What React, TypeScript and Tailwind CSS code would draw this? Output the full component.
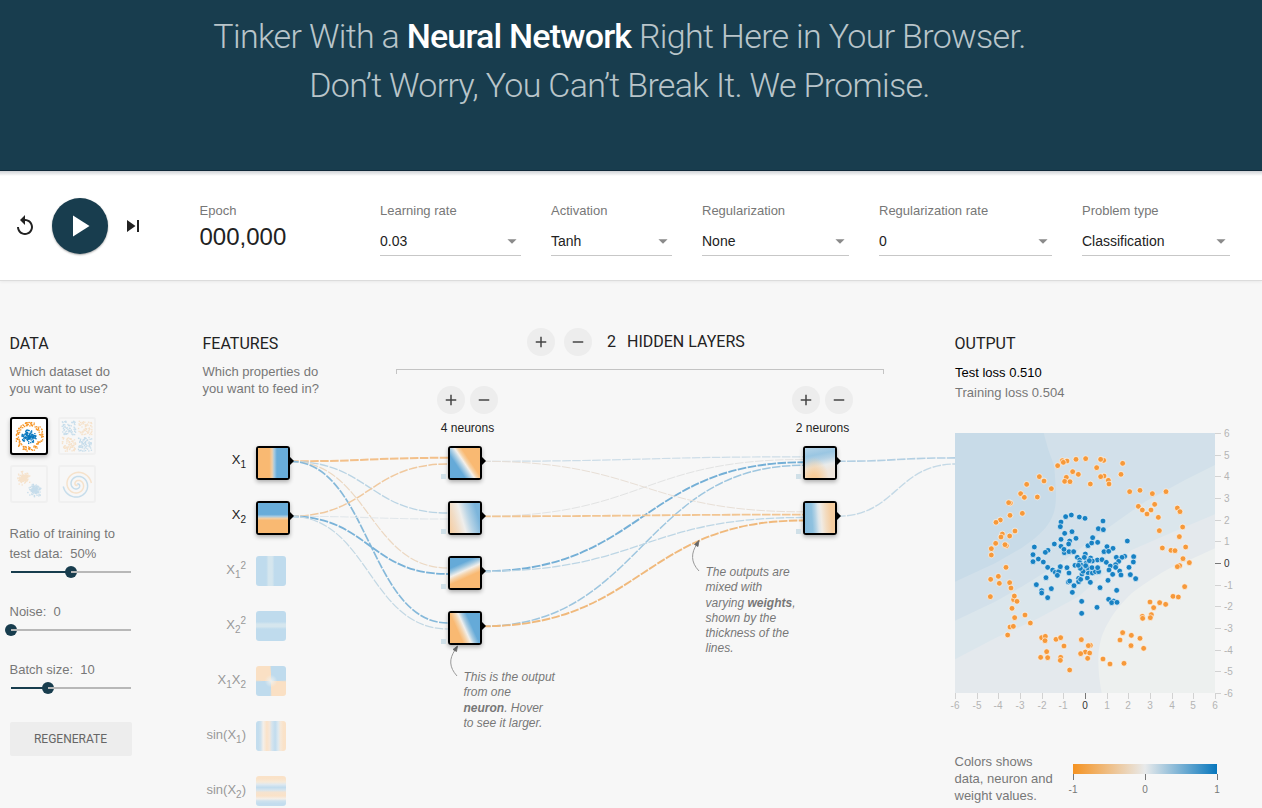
import React from "react";

type Pt = [number, number];

const toPoints = (s: string): Pt[] =>
  s.split(" ").map((p) => p.split(",").map(Number) as Pt);

const ORANGE_POINTS = toPoints(
  "322,83 336,84 325,88 363,79 392,77 438,79 308,98 353,116 370,124 425,104 334,133 329,145 345,146 406,153 253,131 267,144 289,167 215,154 197,182 208,193 247,192 166,210 161,209 202,241 165,247 136,261 123,268 180,294 142,303 138,312 164,309 122,331 154,338 150,335 109,347 109,366 153,403 " +
    "446,82 437,79 503,91 498,124 447,129 437,131 460,142 462,153 524,176 555,172 592,182 633,176 599,214 550,220 562,231 588,231 576,243 610,253 667,225 675,236 683,282 613,293 673,311 692,342 622,345 648,352 660,353 684,377 703,389 674,398 667,401 " +
    "130,430 107,439 133,451 164,449 168,465 106,491 176,500 178,489 186,505 171,526 210,546 179,554 226,570 165,582 175,580 158,606 260,614 271,610 270,623 303,619 317,614 327,639 275,656 257,673 278,674 317,673 316,682 344,711 379,620 406,637 400,638 391,657 377,662 404,660 398,676 444,678 " +
    "689,461 654,490 670,492 585,507 614,509 632,514 596,524 589,545 586,554 562,550 563,556 503,599 529,607 495,621 555,616 528,638 566,646 465,693 507,691"
);

const BLUE_POINTS = toPoints(
  "332,251 349,246 373,252 390,256 318,267 316,281 329,301 351,296 318,319 363,316 344,324 341,333 298,333 318,340 328,359 327,349 342,356 356,356 279,352 271,358 238,342 234,365 234,386 250,378 265,387 278,403 316,401 336,404 360,397 367,373 374,381 384,399 391,363 407,375 399,338 410,330 413,314 428,328 430,287 444,264 445,290 427,381 441,380 395,386 388,373 " +
    "456,341 474,346 447,356 461,355 517,324 509,370 484,373 501,373 536,371 491,385 482,395 454,388 466,399 535,387 522,403 412,384 393,391 " +
    "293,411 301,418 311,416 307,427 273,434 342,420 340,447 344,444 357,458 244,455 289,467 260,473 260,480 278,494 352,478 371,436 371,446 377,439 381,423 397,435 406,448 399,419 412,420 421,416 431,416 435,464 380,505 426,523 380,541 " +
    "459,442 485,472 461,499 476,504 470,509 486,508 462,411 473,424 494,414 498,426 526,425 542,437 " +
    "374,389 389,409 384,415 398,404 411,404 428,404 379,397 403,383 376,406 370,397 316,401 482,403 392,398"
);

/* ---------- icons ---------- */

const ADD = "M19 13h-6v6h-2v-6H5v-2h6V5h2v6h6v2z";
const REMOVE = "M19 13H5v-2h14v2z";

function Icon({ d, className }: { d: string; className: string }) {
  return (
    <svg viewBox="0 0 24 24" className={className} fill="currentColor">
      <path d={d} />
    </svg>
  );
}

function RoundButton({ d }: { d: string }) {
  return (
    <button className="flex size-7 items-center justify-center rounded-full bg-[#ededed] text-[#444]">
      <Icon d={d} className="size-[18px]" />
    </button>
  );
}

/* ---------- top controls ---------- */

function Select({ label, value, className }: { label: string; value: string; className: string }) {
  return (
    <div className={className}>
      <div className="text-[13px] leading-4 text-[#777]">{label}</div>
      <div className="mt-[9px] flex h-[28px] items-center justify-between border-b border-[#c7c7c7] pb-[1px] text-[14px] text-[#222]">
        <span>{value}</span>
        <Icon d="M7 10l5 5 5-5z" className="-mr-[2px] size-[22px] text-[#8a8a8a]" />
      </div>
    </div>
  );
}

function Controls() {
  return (
    <div className="relative flex h-[110px] items-start border-b border-[#dcdcdc] bg-white shadow-[0_1px_3px_rgba(0,0,0,0.06)]">
      <div className="absolute inset-x-0 top-0 h-[5px] bg-gradient-to-b from-[#cfd2d6] to-white" />
      <div className="flex w-[200px] items-center pt-[27px] pl-[13px]">
        <Icon
          className="size-6 text-[#222]"
          d="M12 5V1L7 6l5 5V7c3.31 0 6 2.69 6 6s-2.69 6-6 6-6-2.69-6-6H4c0 4.42 3.58 8 8 8s8-3.58 8-8-3.58-8-8-8z"
        />
        <button className="ml-[15px] flex size-14 items-center justify-center rounded-full bg-[#183d4e] text-white shadow-[0_1px_2px_rgba(0,0,0,0.35)]">
          <Icon d="M8 5v14l11-7z" className="mr-[2px] size-9" />
        </button>
        <Icon d="M6 18l8.500-6L6 6v12zM16 6v12h2V6h-2z" className="ml-[13px] size-6 text-[#222]" />
      </div>
      <div className="-ml-[0.5px] w-[180.5px] pt-[32px]">
        <div className="text-[13px] leading-4 text-[#777]">Epoch</div>
        <div className="mt-1 text-[24px] leading-7 text-[#222]">000,000</div>
      </div>
      <div className="flex gap-[30px] pt-[32px]">
        <Select className="w-[141px]" label="Learning rate" value="0.03" />
        <Select className="w-[121px]" label="Activation" value="Tanh" />
        <Select className="w-[147px]" label="Regularization" value="None" />
        <Select className="w-[173px]" label="Regularization rate" value="0" />
        <Select className="w-[148px]" label="Problem type" value="Classification" />
      </div>
    </div>
  );
}

/* ---------- data column ---------- */

function seeded(seed: number) {
  let a = seed;
  return () => {
    a = (a + 0x6d2b79f5) | 0;
    let t = Math.imul(a ^ (a >>> 15), 1 | a);
    t = (t + Math.imul(t ^ (t >>> 7), 61 | t)) ^ t;
    return ((t ^ (t >>> 14)) >>> 0) / 4294967296;
  };
}

const ORANGE = "#f59322";
const BLUE = "#0877bd";

function Dots({ points, fill, size = 1.3 }: { points: Pt[]; fill: string; size?: number }) {
  return (
    <>
      {points.map(([x, y], i) => (
        <rect key={i} x={x - size / 2} y={y - size / 2} width={size} height={size} fill={fill} />
      ))}
    </>
  );
}

function xorPoints(): [Pt[], Pt[]] {
  const r = seeded(77);
  const blue: Pt[] = [];
  const orange: Pt[] = [];
  for (let i = 0; i < 280; i++) {
    const x = (r() < 0.5 ? -1 : 1) * (1.3 + r() * 13.7);
    const y = (r() < 0.5 ? -1 : 1) * (1.3 + r() * 13.7);
    (x * y > 0 ? blue : orange).push([17 + x, 17.2 + y]);
  }
  return [blue, orange];
}

function blob(seed: number, cx: number, cy: number): Pt[] {
  const r = seeded(seed);
  const g = () => (r() + r() + r() - 1.5) * 5;
  return Array.from({ length: 150 }, () => [cx + g(), cy + g()] as Pt);
}

function spiral(delta: number): string {
  return Array.from({ length: 90 }, (_, i) => {
    const r = (i / 90) * 14.3;
    const t = ((1.75 * i) / 90) * 2 * Math.PI + delta;
    return `${17.3 + r * Math.sin(t)},${17.7 - r * Math.cos(t)}`;
  }).join(" ");
}

function Thumb({ active, children }: { active?: boolean; children: React.ReactNode }) {
  return (
    <div
      className={
        active
          ? "size-[38px] rounded-[3px] border-2 border-black bg-white shadow-[0_2px_4px_rgba(0,0,0,0.25)]"
          : "size-[38px] rounded-[3px] border-2 border-[#f0f0f0]"
      }
    >
      <svg viewBox="0 0 34 34" className={active ? "size-full" : "size-full opacity-20"}>
        {children}
      </svg>
    </div>
  );
}

function Slider({ fill }: { fill: string }) {
  return (
    <div className="mt-0.5 ml-px flex h-3 w-[120px] items-center">
      <div className={`h-0.5 bg-[#183d4e] ${fill}`} />
      <div className="-mx-1.5 size-3 shrink-0 rounded-full bg-[#183d4e]" />
      <div className="h-0.5 flex-1 bg-[#b8b8b8]" />
    </div>
  );
}

function DataColumn() {
  const [xb, xo] = xorPoints();
  const shrink = ([x, y]: Pt): Pt => [17.6 + (x - 400) * 0.045, 17.6 + (y - 390) * 0.045];
  return (
    <div className="w-[203px] pt-[53px] pl-[10px] text-[13px] text-[#777]">
      <h4 className="-ml-[0.5px] font-[Roboto] text-[16px] leading-5 text-[#222]">DATA</h4>
      <p className="mt-[9px] -ml-[0.5px] w-[110px] leading-[17px]">Which dataset do you want to use?</p>
      <div className="mt-5 grid w-[86px] grid-cols-2 gap-[10px]">
        <Thumb active>
          <Dots points={ORANGE_POINTS.map(shrink)} fill={ORANGE} />
          <Dots points={BLUE_POINTS.map(shrink)} fill={BLUE} />
        </Thumb>
        <Thumb>
          <Dots points={xb} fill={BLUE} />
          <Dots points={xo} fill={ORANGE} />
        </Thumb>
        <Thumb>
          <Dots points={blob(5, 12, 11.5)} fill={ORANGE} />
          <Dots points={blob(91, 22.8, 23)} fill={BLUE} />
        </Thumb>
        <Thumb>
          <polyline points={spiral(0)} fill="none" stroke={BLUE} strokeWidth="1.5" />
          <polyline points={spiral(Math.PI)} fill="none" stroke={ORANGE} strokeWidth="1.5" />
        </Thumb>
      </div>
      <p className="mt-[21px] -ml-[0.5px] leading-5">
        Ratio of training to
        <br />
        test data:&nbsp; 50%
      </p>
      <Slider fill="w-[60px]" />
      <p className="mt-6 -ml-[0.5px] leading-5">Noise:&nbsp; 0</p>
      <Slider fill="w-0" />
      <p className="mt-6 -ml-[0.5px] leading-5">Batch size:&nbsp; 10</p>
      <Slider fill="w-[37px]" />
      <button className="mt-7 h-[34px] w-[122px] rounded-[2px] bg-[#ededed] pr-px font-[Roboto] text-[12px] text-[#666]">
        REGENERATE
      </button>
    </div>
  );
}

/* ---------- network ---------- */

function Sub({ children }: { children: React.ReactNode }) {
  return <span className="relative top-1 text-[10px]">{children}</span>;
}
function Sup({ children }: { children: React.ReactNode }) {
  return <span className="relative -top-[5px] text-[10px]">{children}</span>;
}

function Node({ className, bias }: { className: string; bias?: boolean }) {
  return (
    <div className="relative size-[34px]">
      {bias && <div className="absolute top-7 -left-[7px] size-[5px] bg-[#d0e0e8]" />}
      <div className="size-[34px] rounded-[3px] border-2 border-black shadow-[0_2px_4px_rgba(0,0,0,0.3)]">
        <div className={`size-[30px] ${className}`} />
      </div>
      <svg viewBox="0 0 5 8" className="absolute top-[11px] left-[33px] h-2 w-[5px]">
        <path d="M0 0h1l4 4-4 4H0z" />
      </svg>
    </div>
  );
}

function Feature({ label, active, className }: { label: React.ReactNode; active?: boolean; className: string }) {
  return (
    <div className="mb-[25px] flex h-[30px] w-[87px] items-start">
      <div
        className={`w-[43px] text-right text-[13px] leading-[28px] whitespace-nowrap ${active ? "text-[#222]" : "text-[#999]"}`}
      >
        {label}
      </div>
      <div className="ml-[10px]">
        {active ? <Node className={className} /> : <div className={`size-[30px] rounded-[3px] ${className}`} />}
      </div>
    </div>
  );
}

const X1 = (
  <>
    X<Sub>1</Sub>
  </>
);
const X2 = (
  <>
    X<Sub>2</Sub>
  </>
);

const FEATURES: { label: React.ReactNode; active?: boolean; className: string }[] = [
  { label: X1, active: true, className: "bg-[linear-gradient(90deg,#f9b972_38%,#f0cfa8_47%,#a9cbe0_54%,#68acd9_63%)]" },
  { label: X2, active: true, className: "bg-[linear-gradient(180deg,#68acd9_38%,#a9cbe0_45%,#f0cfa8_51%,#f9b972_58%)]" },
  {
    label: <>{X1}<Sup>2</Sup></>,
    className: "bg-[linear-gradient(90deg,#bfdbed_34%,#d5e6ee_42%,#d5e6ee_54%,#bfdbed_62%)]",
  },
  {
    label: <>{X2}<Sup>2</Sup></>,
    className: "bg-[linear-gradient(180deg,#bfdbed_36%,#d5e6ee_44%,#d5e6ee_52%,#bfdbed_60%)]",
  },
  {
    label: <>{X1}{X2}</>,
    className:
      "bg-[radial-gradient(circle,#eef0ee_0,#eef0ee00_30%),conic-gradient(#bfdbed_24%,#fae0c4_26%_49%,#bfdbed_51%_74%,#fae0c4_76%_99%,#bfdbed)]",
  },
  {
    label: <>sin({X1})</>,
    className:
      "bg-[linear-gradient(90deg,#c3ddee_8%,#cfe2ee_16%,#f4efe9_24%,#fae2c8_36%,#f5e6d8_45%,#d5e4ee_53%,#c1dcee_64%,#dde9f0_74%,#f6e8d8_82%,#fae2c8_92%)]",
  },
  {
    label: <>sin({X2})</>,
    className:
      "bg-[linear-gradient(180deg,#fae2c8_8%,#f6ead9_20%,#dfe9f0_28%,#c1dcee_38%,#d7e5ee_47%,#f5e3d0_54%,#fae2c8_66%,#f4efe9_76%,#cfe2ee_83%,#c3ddee_92%)]",
  },
];

const LAYER_ONE = [
  "bg-[linear-gradient(56deg,#65aad8_30%,#b9d5e6_42%,#f4efe9_49%,#f6d2a6_55%,#f9b972_63%)]",
  "bg-[linear-gradient(74deg,#f6cda0_0%,#f1dcc5_22%,#efeeec_42%,#b8d4e6_60%,#7cb5db_85%)]",
  "bg-[linear-gradient(156deg,#65aad8_24%,#a3cae2_34%,#f2efea_44%,#f6d3aa_52%,#f9b972_62%)]",
  "bg-[linear-gradient(66deg,#f9b972_30%,#f5d3aa_40%,#f0efec_49%,#a9cce2_57%,#65aad8_68%)]",
];
const LAYER_TWO = [
  "bg-[radial-gradient(ellipse_at_30%_115%,#f8cc98_15%,#f8cc9800_52%),linear-gradient(168deg,#b5d3e7_0%,#9ac6e2_25%,#b5d2e5_40%,#e9ebeb_58%,#f0e6dc_75%)]",
  "bg-[linear-gradient(86deg,#84b9dc_0%,#8fc1df_25%,#b5d3e5_36%,#dce5ea_45%,#f0ebe4_54%,#f3dcc1_68%,#f5cda0_85%)]",
];

/* source x, source y, target x, target y, colour, width */
const LINKS: [number, number, number, number, string, number][] = [
  [290, 461.3, 448, 457.8, "#f3c08a", 2],
  [290, 461.3, 448, 513, "#bad4e4", 1.3],
  [290, 461.3, 448, 568, "#ecd8c2", 1.2],
  [290, 461.3, 448, 623, "#86b9da", 1.7],
  [290, 516.3, 448, 464, "#f0c99f", 1.5],
  [290, 516.3, 448, 519, "#e0e6ea", 1.1],
  [290, 516.3, 448, 574, "#79b2d8", 1.8],
  [290, 516.3, 448, 629, "#c3d8e4", 1.2],
  [482, 461.3, 803, 456.8, "#cddde8", 1.2],
  [482, 516.3, 803, 459.5, "#e2e3e3", 1],
  [482, 571.3, 803, 462.3, "#74afd6", 1.9],
  [482, 626.3, 803, 465.3, "#9ec6df", 1.5],
  [482, 461.3, 803, 511.8, "#e8dfd6", 1],
  [482, 516.3, 803, 514.6, "#f2c592", 1.8],
  [482, 571.3, 803, 517.5, "#bdd6e5", 1.3],
  [482, 626.3, 803, 520.5, "#f0b97c", 1.9],
  [837, 461.3, 956, 457.9, "#b4d0e3", 1.6],
  [837, 516.3, 956, 464, "#c4d9e6", 1.4],
];

function Links() {
  return (
    <svg viewBox="203 281 752 527" className="absolute inset-0 h-[527px] w-[752px]" fill="none">
      {LINKS.map(([x0, y0, x1, y1, c, w], i) => {
        const m = (x0 + x1) / 2;
        return (
          <path
            key={i}
            d={`M${x0} ${y0}C${m} ${y0} ${m} ${y1} ${x1} ${y1}`}
            stroke={c}
            strokeWidth={w}
            strokeDasharray="8.600 1.400"
          />
        );
      })}
      <path d="M457 676C449 667 449 659 455 650" stroke="#999" />
      <path d="M457.500 646l-4.500 3.500 3.500 2z" fill="#666" stroke="#666" strokeWidth="0.8" />
      <path d="M699 571C690.500 562 691 553 697 544" stroke="#999" />
      <path d="M699 540.500l-4.500 4 3.500 2z" fill="#666" stroke="#666" strokeWidth="0.8" />
    </svg>
  );
}

function Layer({ count, nodes }: { count: string; nodes: string[] }) {
  return (
    <div className="w-[61px]">
      <div className="flex gap-[5px]">
        <RoundButton d={ADD} />
        <RoundButton d={REMOVE} />
      </div>
      <div className="mt-1.5 text-center text-[12px] leading-4 whitespace-nowrap text-[#222]">{count} neurons</div>
      <div className="mt-[10px] ml-[11px] flex flex-col gap-[21px]">
        {nodes.map((n) => (
          <Node key={n} className={n} bias />
        ))}
      </div>
    </div>
  );
}

function Network() {
  return (
    <div className="relative flex w-[752px]">
      <Links />
      <div className="relative w-[193px] pt-[53px]">
        <h4 className="-ml-[0.5px] font-[Roboto] text-[16px] leading-5 text-[#222]">FEATURES</h4>
        <p className="mt-[9px] mb-[49px] -ml-[0.5px] w-[122px] text-[13px] leading-[17px] text-[#777]">
          Which properties do you want to feed in?
        </p>
        {FEATURES.map((f, i) => (
          <Feature key={i} {...f} />
        ))}
      </div>
      <div className="relative w-[488px] pt-[47px]">
        <div className="flex items-center pl-[131px] font-[Roboto] text-[16px] text-[#222]">
          <RoundButton d={ADD} />
          <span className="w-[9px]" />
          <RoundButton d={REMOVE} />
          <span className="ml-[15px] w-5">2</span>
          <span>HIDDEN LAYERS</span>
        </div>
        <div className="mt-[13px] h-[5px] border-x border-t border-[#c4c4c4]" />
        <div className="mt-3 flex items-start justify-between pr-[31px] pl-[41px]">
          <Layer count="4" nodes={LAYER_ONE} />
          <Layer count="2" nodes={LAYER_TWO} />
        </div>
      </div>
      <p className="absolute top-[389px] left-[260.5px] w-[100px] text-[12px] leading-[15.4px] text-[#777] italic">
        This is the output
        <br />
        from one
        <br />
        <b>neuron</b>. Hover
        <br />
        to see it larger.
      </p>
      <p className="absolute top-[284px] left-[502.5px] w-[94px] text-[12px] leading-[15.3px] text-[#777] italic">
        The outputs are mixed with varying <b>weights</b>, shown by the thickness of the lines.
      </p>
    </div>
  );
}

/* ---------- output column ---------- */

const TICKS = [-6, -5, -4, -3, -2, -1, 0, 1, 2, 3, 4, 5, 6];

function Plot() {
  return (
    <svg viewBox="0 0 300 285" className="block h-[285px] w-[300px] overflow-visible">
      <g transform="scale(0.33333)">
        <rect width="780" height="780" fill="#edf0ef" />
        <path
          d="M0 0H780V346L690 387C650 402 630 412 610 426C580 445 555 460 530 481C500 510 485 530 470 551C452 580 446 595 440 611C432 640 430 660 430 681C430 710 433 745 440 780H0Z"
          fill="#e4e9ed"
        />
        <path d="M0 0H780V244L680 286L530 351L370 491L250 556L120 616L0 679Z" fill="#dbe6ec" />
        <path d="M0 0H780V96L690 141L570 206L450 291L330 380L200 461L120 506L0 563Z" fill="#d2e0ea" />
        <path d="M0 0H266L280 50L298 100L303 180C303 225 298 240 285 265C270 292 240 318 200 345L120 391L0 446Z" fill="#c8dbe8" />
        <g fill="#f6993a" stroke="#fff" strokeOpacity="0.75" strokeWidth="2.5">
          {ORANGE_POINTS.map(([x, y], i) => (
            <circle key={i} cx={x} cy={y} r="8.600" />
          ))}
        </g>
        <g fill="#1781c3" stroke="#fff" strokeOpacity="0.75" strokeWidth="2.5">
          {BLUE_POINTS.map(([x, y], i) => (
            <circle key={i} cx={x} cy={y} r="8.600" />
          ))}
        </g>
      </g>
      {TICKS.map((t) => {
        const p = Math.round(130 + t * 21.667) + 0.5;
        const q = Math.round(130 - t * 21.667) + 0.5;
        const line = t === 0 ? "#777" : "#d2d2d2";
        const text = t === 0 ? "#333" : "#b4b4b4";
        return (
          <g key={t} fontSize="10" fill={text} stroke="none">
            <path d={`M${p} 260v6M260 ${q}h6`} stroke={line} />
            <text x={p - 0.5} y="276" textAnchor="middle">
              {t}
            </text>
            <text x="269" y={q + 3}>
              {t}
            </text>
          </g>
        );
      })}
    </svg>
  );
}

function Output() {
  return (
    <div className="w-[304px] pt-[53px] text-[13px] text-[#777]">
      <h4 className="-ml-[0.5px] font-[Roboto] text-[16px] leading-5 text-[#222]">OUTPUT</h4>
      <div className="mt-[9px] leading-5 text-black">Test loss 0.510</div>
      <div className="mb-[30px] leading-5">Training loss 0.504</div>
      <Plot />
      <div className="mt-[35px] flex">
        <p className="-ml-[0.5px] w-[110.5px] leading-[17px]">
          Colors shows
          <br />
          data, neuron and
          <br />
          weight values.
        </p>
        <svg viewBox="0 0 160 34" className="mt-[11px] h-[34px] w-[160px]">
          <defs>
            <linearGradient id="scale">
              <stop offset="0" stopColor="#f59322" />
              <stop offset="0.5" stopColor="#e8eaeb" />
              <stop offset="1" stopColor="#0877bd" />
            </linearGradient>
          </defs>
          <rect x="8" width="144" height="10" fill="url(#scale)" />
          <path d="M8.500 10v6M80.500 10v6M152.500 10v6" stroke="#777" />
          <g fontSize="10" fill="#777" textAnchor="middle">
            <text x="8" y="29">-1</text>
            <text x="80" y="29">0</text>
            <text x="152" y="29">1</text>
          </g>
        </svg>
      </div>
    </div>
  );
}

export default function App() {
  return (
    <div className="h-[808px] w-[1262px] overflow-hidden bg-[#f7f7f7] font-['Liberation_Sans',Arial,sans-serif]">
      <header className="h-[171px] border-b border-[#10293a] bg-[#183d4e] pt-[12px]">
        <h1 className="w-[1239px] text-center font-[Roboto] text-[34px] leading-[49px] font-light tracking-[-0.02em] text-[#b9c5ca]">
          Tinker With a <b className="font-medium tracking-[-0.024em] text-white">Neural Network</b> Right Here in Your Browser.
          <br />
          Don’t Worry, You Can’t Break It. We Promise.
        </h1>
      </header>
      <Controls />
      <main className="flex h-[527px]">
        <DataColumn />
        <Network />
        <Output />
      </main>
    </div>
  );
}
